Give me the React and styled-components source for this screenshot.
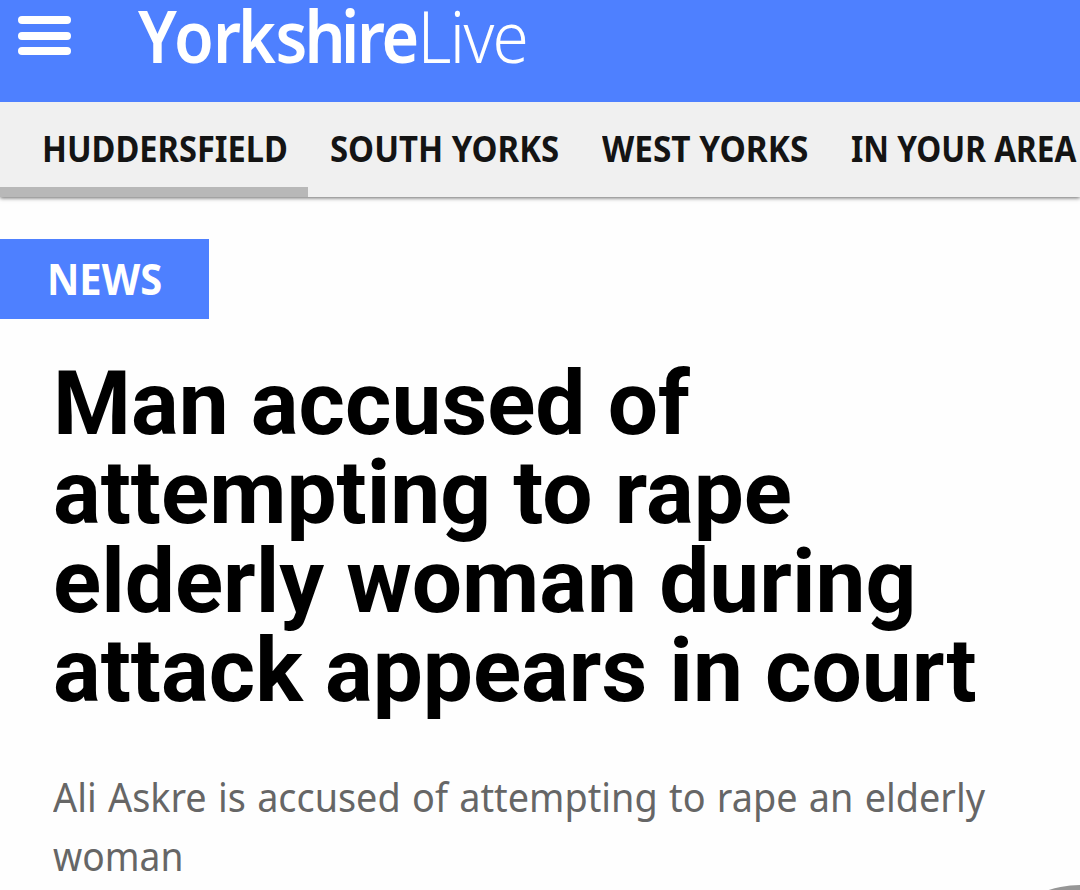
import React from "react";
import styled, { createGlobalStyle } from "styled-components";

const GlobalStyle = createGlobalStyle`
  *, *::before, *::after { box-sizing: border-box; }
  body { margin: 0; background: #fefefe; }
`;

const Page = styled.div`
  position: relative;
  width: 1080px;
  height: 890px;
  overflow: hidden;
  background: #fefefe;
  font-family: "Noto Sans", "Open Sans", sans-serif;
`;

const Header = styled.header`
  position: relative;
  z-index: 1;
  display: flex;
  align-items: flex-start;
  height: 102px;
  padding-left: 18px;
  background: #4e80ff;
`;

const MenuButton = styled.button`
  display: flex;
  flex-direction: column;
  gap: 7.5px;
  width: 53px;
  margin: 16px 62px 0 0;
  padding: 0;
  border: 0;
  background: none;
`;

const MenuBar = styled.span`
  width: 53px;
  height: 8px;
  border-radius: 4px;
  background: #fff;
`;

const Logo = styled.svg`
  display: block;
  overflow: visible;
  fill: #fff;
`;

const Nav = styled.nav`
  display: flex;
  height: 95px;
  padding-left: 21px;
  background: #f0f0f0;
  box-shadow: 0 1px 4px rgba(0, 0, 0, 0.6);
`;

const NavItem = styled.a`
  flex: none;
  width: ${(p) => p.$width}px;
  height: 95px;
  padding-left: 21.5px;
  color: #141414;
  font-size: 36.5px;
  font-weight: 670;
  line-height: 93px;
  white-space: nowrap;
  ${(p) =>
    p.$active &&
    `
    margin-left: -21px;
    padding-left: 41.5px;
    border-bottom: 10px solid #b8b8b8;
  `}
`;

const Fitted = styled.span`
  display: block;
  width: max-content;
  transform: scaleX(${(p) => p.$scale});
  transform-origin: 0 50%;
`;

const Category = styled.div`
  width: 209px;
  height: 80px;
  margin-top: 42px;
  padding-left: 47px;
  background: #4e80ff;
  color: #fff;
  font-size: 43.5px;
  font-weight: 700;
  line-height: 78px;
`;

const Headline = styled.h1`
  margin: 40px 0 0 53px;
  color: #000;
  font: 700 89.15px/89px Roboto, sans-serif;
  white-space: pre-line;
`;

const Summary = styled.p`
  margin: 52px 0 0 53px;
  color: #666;
  font-size: 40px;
  line-height: 59px;
  word-spacing: 1.6px;
  white-space: nowrap;
`;

const FloatingButton = styled.div`
  position: absolute;
  left: 980px;
  top: 885px;
  width: 200px;
  height: 200px;
  border-radius: 50%;
  background: #969696;
`;

const sections = [
  { label: "HUDDERSFIELD", width: 308, scale: 0.893, active: true },
  { label: "SOUTH YORKS", width: 272, scale: 0.901 },
  { label: "WEST YORKS", width: 249, scale: 0.914 },
  { label: "IN YOUR AREA", width: 251, scale: 0.866 },
];

export default function App() {
  return (
    <Page>
      <GlobalStyle />
      <Header>
        <MenuButton aria-label="Menu">
          <MenuBar />
          <MenuBar />
          <MenuBar />
        </MenuButton>
        <Logo width="400" height="80" viewBox="133 0 400 80" aria-label="YorkshireLive">
          <text transform="translate(138 62.5) scale(0.89 1)" x="0 40.4 84.3 112.4 154.5 187 228.1 246.1 273.6" fontSize="72.5" fontWeight="640">Yorkshire</text>
          <text transform="translate(417.5 62.5) scale(0.92 1)" fontSize="71.5" fontWeight="345" letterSpacing="-1.8">Live</text>
        </Logo>
      </Header>
      <Nav>
        {sections.map((s) => (
          <NavItem key={s.label} $width={s.width} $active={s.active}>
            <Fitted $scale={s.scale}>{s.label}</Fitted>
          </NavItem>
        ))}
      </Nav>
      <Category>
        <Fitted $scale={0.915}>NEWS</Fitted>
      </Category>
      <Headline>{"Man accused of\nattempting to rape\nelderly woman during\nattack appears in court"}</Headline>
      <Summary>
        <Fitted $scale={0.945}>Ali Askre is accused of attempting to rape an elderly</Fitted>
        <Fitted $scale={0.93}>woman</Fitted>
      </Summary>
      <FloatingButton />
    </Page>
  );
}
